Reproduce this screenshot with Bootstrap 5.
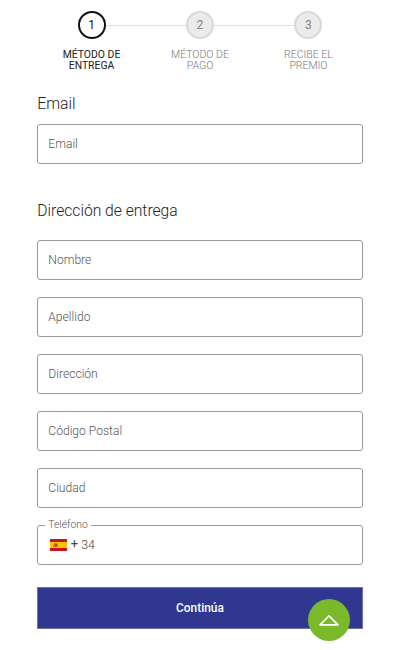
<!DOCTYPE html>
<html lang="es">
<head>
<meta charset="utf-8">
<meta name="viewport" content="width=device-width, initial-scale=1">
<title>Método de entrega</title>
<link href="https://cdn.jsdelivr.net/npm/bootstrap@5.3.0/dist/css/bootstrap.min.css" rel="stylesheet">
<style>
body{font-family:Roboto,"Liberation Sans",sans-serif;font-weight:300;color:#222;background:#fff;overflow:hidden}
.checkout{width:325.4px}
.steps{padding-top:11px;height:94px}
.step{width:33.3333%;color:#848484}
.step.current{color:#111}
.step-label{margin-top:11px;font-size:10.5px;line-height:10.5px;font-weight:300;color:#777}
.step-label span{display:block}
.current .step-label{font-weight:400;font-size:10.4px;color:#222}
.rail{height:1px;background:#ddd}
.bullet{width:28px;height:28px;border:2px solid #d9d9d9;background:#ebebeb;font-size:12px;line-height:12px;font-weight:400}
.current .bullet{border-color:#111;background:#fff}
.heading{font-size:15.65px;line-height:20px;font-weight:300}
.email-field{margin-top:10px}
.delivery{margin-top:37px}
.field>.form-control{height:40px;min-height:40px;padding:0 10px;border:1px solid #999;border-radius:3px;line-height:38px;font-size:12.2px;font-weight:300}
.field>label{height:40px;padding:0 10px;border:1px solid transparent;line-height:38px;font-size:12.1px;color:#555}
.fields{gap:17px;margin-top:19px}
.phone{height:40px;border:1px solid #999;border-radius:3px;padding:0 11.5px}
.phone-label{top:-8px;left:7px;padding:0 3px;line-height:13px;font-size:10.4px;color:#555;background:#fff}
.flag{width:17px;height:12px}
.plus{margin:-3px 0 0 4px;font-size:13px;font-weight:400;color:#444;line-height:16px}
.code{margin-left:3px;font-size:12.3px;color:#444;line-height:16px}
.submit{height:42px;margin-top:22px;border:1px solid #6d71ac;background:#303791;color:#fff;font-size:11.9px;font-weight:500}
.submit span{padding-top:1px}
.to-top{left:308px;top:599px;width:42px;height:42px;background:#7ab929}
</style>
</head>
<body>
<main class="checkout mx-auto">
  <nav class="steps d-flex text-center">
    <div class="step current">
      <div class="d-flex align-items-center"><span class="flex-fill"></span><span class="bullet rounded-circle d-flex align-items-center justify-content-center">1</span><span class="rail flex-fill"></span></div>
      <div class="step-label"><span>MÉTODO DE</span><span>ENTREGA</span></div>
    </div>
    <div class="step">
      <div class="d-flex align-items-center"><span class="rail flex-fill"></span><span class="bullet rounded-circle d-flex align-items-center justify-content-center">2</span><span class="rail flex-fill"></span></div>
      <div class="step-label"><span>MÉTODO DE</span><span>PAGO</span></div>
    </div>
    <div class="step">
      <div class="d-flex align-items-center"><span class="rail flex-fill"></span><span class="bullet rounded-circle d-flex align-items-center justify-content-center">3</span><span class="flex-fill"></span></div>
      <div class="step-label"><span>RECIBE EL</span><span>PREMIO</span></div>
    </div>
  </nav>
  <form>
    <h2 class="heading mb-0">Email</h2>
    <div class="form-floating field email-field"><input type="email" class="form-control" id="email" placeholder=" "><label for="email">Email</label></div>
    <h2 class="heading delivery mb-0">Dirección de entrega</h2>
    <div class="fields d-flex flex-column">
      <div class="form-floating field"><input class="form-control" id="nombre" placeholder=" "><label for="nombre">Nombre</label></div>
      <div class="form-floating field"><input class="form-control" id="apellido" placeholder=" "><label for="apellido">Apellido</label></div>
      <div class="form-floating field"><input class="form-control" id="direccion" placeholder=" "><label for="direccion">Dirección</label></div>
      <div class="form-floating field"><input class="form-control" id="postal" placeholder=" "><label for="postal">Código Postal</label></div>
      <div class="form-floating field"><input class="form-control" id="ciudad" placeholder=" "><label for="ciudad">Ciudad</label></div>
      <div class="phone position-relative d-flex align-items-center">
        <span class="phone-label position-absolute">Teléfono</span>
        <svg class="flag" viewBox="0 0 17 12" aria-hidden="true"><path fill="#c8141e" d="M0 0h17v12H0z"/><path fill="#ffc400" d="M0 3h17v6H0z"/><path fill="#ad5a18" d="M4.2 4.2h3v3.2l-1.5.8-1.5-.8z"/><path fill="#8c8450" d="M3.2 5h.7v3h-.7zM7.5 5h.7v3h-.7z"/></svg>
        <span class="plus">+</span><span class="code">34</span>
      </div>
    </div>
    <button type="button" class="submit btn rounded-0 w-100 d-flex align-items-center justify-content-center p-0"><span>Continúa</span></button>
  </form>
</main>
<a href="#" class="to-top position-fixed rounded-circle d-flex align-items-center justify-content-center" aria-label="Subir">
  <svg width="22" height="14" viewBox="0 0 22 14" fill="none" stroke="#fff" stroke-width="1.7" stroke-linejoin="round"><path d="M2 11.8 11 2.8l9 9z"/></svg>
</a>
<script src="https://cdn.jsdelivr.net/npm/bootstrap@5.3.0/dist/js/bootstrap.bundle.min.js"></script>
</body>
</html>
